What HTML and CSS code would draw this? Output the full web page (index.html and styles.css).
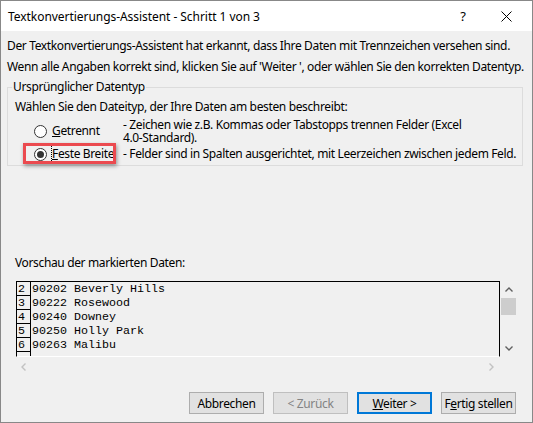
FILE: index.html
```html
<!DOCTYPE html>
<html lang="de">
<head>
    <meta charset="UTF-8">
    <title>Textkonvertierungs-Assistent - Schritt 1 von 3</title>
    <link rel="stylesheet" href="styles.css">
</head>
<body>
    <div class="window">
        <div class="titlebar">
            <span class="title">Textkonvertierungs-Assistent - Schritt 1 von 3</span>
            <span class="help">?</span>
            <span class="close">
                <svg width="11" height="11" viewBox="0 0 11 11"><path d="M0.5 0.5L10.5 10.5M10.5 0.5L0.5 10.5" stroke="#000" stroke-width="1" fill="none"/></svg>
            </span>
        </div>

        <div class="content">
            <p class="intro">Der Textkonvertierungs-Assistent hat erkannt, dass Ihre Daten mit Trennzeichen versehen sind.</p>
            <p class="intro">Wenn alle Angaben korrekt sind, klicken Sie auf 'Weiter ', oder wählen Sie den korrekten Datentyp.</p>

            <fieldset class="group">
                <legend>Ursprünglicher Datentyp</legend>
                <p class="prompt">Wählen Sie den Dateityp, der Ihre Daten am besten beschreibt:</p>
                <div class="option">
                    <span class="choice"><span class="radio"></span><span><u>G</u>etrennt</span></span>
                    <span class="desc">- Zeichen wie z.B. Kommas oder Tabstopps trennen Felder (Excel<br>4.0-Standard).</span>
                </div>
                <div class="option single">
                    <span class="choice"><span class="radio checked"></span><span class="focus"><u>F</u>este Breite</span></span>
                    <span class="desc">- Felder sind in Spalten ausgerichtet, mit Leerzeichen zwischen jedem Feld.</span>
                    <span class="highlight"></span>
                </div>
            </fieldset>

            <div class="preview-label">Vorschau der markierten Daten:</div>
            <div class="preview">
                <div class="preview-main">
                    <div class="grid">
                        <div class="row"><span class="num">2</span><span class="data">90202 Beverly Hills</span></div>
                        <div class="row"><span class="num">3</span><span class="data">90222 Rosewood</span></div>
                        <div class="row"><span class="num">4</span><span class="data">90240 Downey</span></div>
                        <div class="row"><span class="num">5</span><span class="data">90250 Holly Park</span></div>
                        <div class="row"><span class="num">6</span><span class="data">90263 Malibu</span></div>
                        <div class="row"><span class="num"></span><span class="data"></span></div>
                    </div>
                    <div class="vscroll">
                        <span class="arrow">
                            <svg width="8" height="5" viewBox="0 0 8 5"><path d="M0.5 4.5L4 1L7.5 4.5" stroke="#606060" stroke-width="1.4" fill="none"/></svg>
                        </span>
                        <span class="track"><span class="thumb"></span></span>
                        <span class="arrow">
                            <svg width="8" height="5" viewBox="0 0 8 5"><path d="M0.5 0.5L4 4L7.5 0.5" stroke="#606060" stroke-width="1.4" fill="none"/></svg>
                        </span>
                    </div>
                </div>
                <div class="hscroll">
                    <svg width="5" height="8" viewBox="0 0 5 8"><path d="M4.5 0.5L1 4L4.5 7.5" stroke="#c2c2c2" stroke-width="1.4" fill="none"/></svg>
                    <svg width="5" height="8" viewBox="0 0 5 8"><path d="M0.5 0.5L4 4L0.5 7.5" stroke="#c2c2c2" stroke-width="1.4" fill="none"/></svg>
                </div>
            </div>

            <div class="buttons">
                <button>Abbrechen</button>
                <button class="disabled">&lt; Zurück</button>
                <button class="default"><u>W</u>eiter &gt;</button>
                <button>F<u>e</u>rtig stellen</button>
            </div>
        </div>
    </div>
</body>
</html>
```

FILE: styles.css
```css
body {
    margin: 0;
    font-family: "Noto Sans", sans-serif;
    font-size: 12px;
    color: #000;
}
.window {
    width: 533px;
    height: 423px;
    box-sizing: border-box;
    border: 1px solid #888;
    background-color: #f0f0f0;
    display: flex;
    flex-direction: column;
    overflow: hidden;
}
.titlebar {
    height: 30px;
    flex-shrink: 0;
    background-color: #fff;
    display: flex;
    align-items: center;
    padding: 0 6px 0 7px;
}
.title {
    flex: 1;
    white-space: nowrap;
    letter-spacing: -0.05px;
}
.help {
    width: 46px;
    text-align: center;
    font-size: 13px;
}
.close {
    width: 40px;
    display: flex;
    justify-content: center;
}
.content {
    flex: 1;
    padding: 4px 9px 0 6px;
    display: flex;
    flex-direction: column;
    letter-spacing: -0.36px;
    white-space: nowrap;
}
.intro {
    margin: 0;
    line-height: 21px;
}
.group {
    margin: 2px 0 0;
    padding: 0 6px 3px;
    border: 1px solid #dcdcdc;
    min-width: 0;
}
.group legend {
    padding: 0 1px;
    margin-left: -2px;
    line-height: 16px;
}
.prompt {
    margin: 4px 0 0 1px;
    line-height: 16px;
}
.option {
    display: flex;
    align-items: center;
    margin: 3px 0 0 20px;
    position: relative;
}
.option + .option {
    margin-top: 2px;
}
.choice {
    width: 89px;
    flex-shrink: 0;
    display: flex;
    align-items: center;
    line-height: 16px;
}
.radio {
    width: 13px;
    height: 13px;
    box-sizing: border-box;
    border: 1px solid #333;
    border-radius: 50%;
    background-color: #fff;
    margin-right: 5px;
    display: flex;
    align-items: center;
    justify-content: center;
}
.radio.checked::after {
    content: "";
    width: 7px;
    height: 7px;
    border-radius: 50%;
    background-color: #333;
}
.desc {
    line-height: 13px;
}
.option.single .desc {
    line-height: 16px;
}
.focus {
    outline: 1px dotted #000;
    outline-offset: 0;
}
.highlight {
    position: absolute;
    left: -11px;
    top: -3px;
    width: 93px;
    height: 21px;
    box-sizing: border-box;
    border: 3px solid #eb4a4f;
    box-shadow: 1px 2px 4px rgba(0, 0, 0, 0.4);
}
.preview-label {
    margin: 89px 0 0 8px;
    line-height: 16px;
}
.preview {
    margin: 10px 0 0 9px;
    width: 502px;
}
.preview-main {
    display: flex;
}
.grid {
    width: 484px;
    height: 76px;
    box-sizing: border-box;
    border: 1px solid #000;
    border-bottom-color: #fff;
    overflow: hidden;
    font-family: "Liberation Mono", monospace;
    font-size: 11.67px;
    letter-spacing: 0;
}
.row {
    display: flex;
    height: 14px;
}
.num {
    width: 14px;
    box-sizing: border-box;
    border-right: 1px solid #000;
    border-bottom: 1px solid #000;
    padding: 2px 0 0 1px;
    line-height: 11px;
}
.data {
    padding: 2px 0 0 1px;
    line-height: 11px;
    white-space: pre;
}
.vscroll {
    width: 18px;
    display: flex;
    flex-direction: column;
}
.arrow {
    height: 17px;
    display: flex;
    align-items: center;
    justify-content: center;
}
.track {
    flex: 1;
    padding-left: 1px;
}
.thumb {
    display: block;
    width: 15px;
    height: 17px;
    background-color: #cdcdcd;
}
.hscroll {
    width: 484px;
    height: 20px;
    box-sizing: border-box;
    padding: 0 6px 0 5px;
    display: flex;
    align-items: center;
    justify-content: space-between;
}
.buttons {
    display: flex;
    justify-content: flex-end;
    gap: 9px;
    margin-top: 15px;
    padding-right: 7px;
}
button {
    width: 75px;
    height: 22px;
    padding: 0;
    font-family: "Noto Sans", sans-serif;
    font-size: 12px;
    letter-spacing: -0.36px;
    color: #000;
    background-color: #e1e1e1;
    border: 1px solid #adadad;
}
button.default {
    border: 2px solid #0078d7;
}
button.disabled {
    color: #838383;
    border-color: #bfbfbf;
}
```
